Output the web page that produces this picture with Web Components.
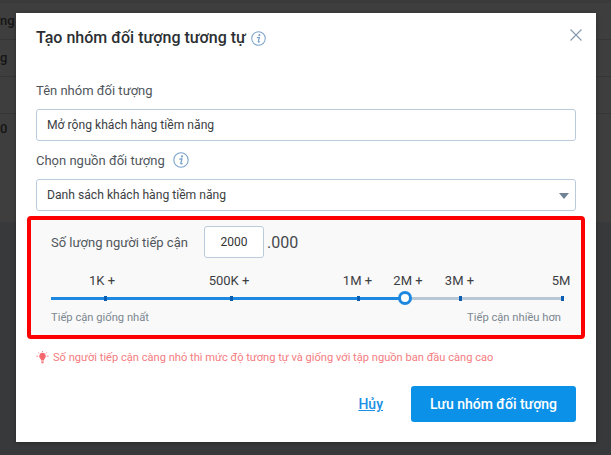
<!DOCTYPE html>
<html lang="vi">
<head>
<meta charset="utf-8">
<title>Tạo nhóm đối tượng tương tự</title>
<style>
  html, body { margin: 0; height: 100%; }
  body { background: #38393b; font-family: Roboto, "Liberation Sans", sans-serif; overflow: hidden; }
</style>
</head>
<body>
<page-behind></page-behind>
<audience-modal heading="Tạo nhóm đối tượng tương tự">
  <form-field label="Tên nhóm đối tượng" value="Mở rộng khách hàng tiềm năng"></form-field>
  <form-field label="Chọn nguồn đối tượng" value="Danh sách khách hàng tiềm năng" hint select></form-field>
  <reach-panel value="2000"></reach-panel>
  <tip-line>Số người tiếp cận càng nhỏ thì mức độ tương tự và giống với tập nguồn ban đầu càng cao</tip-line>
  <modal-actions></modal-actions>
</audience-modal>

<script>
const INFO_ICON = `<svg viewBox="0 0 16 16" fill="none">
  <circle cx="8" cy="8" r="7.2" stroke="#7ba3ca" stroke-width="1.1"/>
  <circle cx="8.9" cy="4.4" r="1.1" fill="#7ba3ca"/>
  <path d="M6.8 7h2.1l-1.1 4.4c-.1.6.4.7 1.3.1" stroke="#7ba3ca" stroke-width="1.3" stroke-linecap="round"/>
</svg>`;

// dimmed table that sits behind the dialog
class PageBehind extends HTMLElement {
  constructor() {
    super();
    this.attachShadow({ mode: 'open' }).innerHTML = `
      <style>
        :host { display: block; position: absolute; left: 0; right: 0; top: 0; height: 222px; background: #3e3e3e; border-top: 3px solid #3a3a3a; box-sizing: border-box; color: #151515; font-size: 13px; font-weight: 500; }
        .row { height: 37px; border-bottom: 1px solid #363636; box-sizing: border-box; display: flex; align-items: center; }
        .row:first-child { height: 36px; }
        .row:last-child { border: 0; height: 31px; }
        span { display: block; margin-top: -2px; }
      </style>
      <div class="row"><span>ng</span></div>
      <div class="row"><span>g</span></div>
      <div class="row"></div>
      <div class="row"><span>0</span></div>`;
  }
}

class AudienceModal extends HTMLElement {
  constructor() {
    super();
    const title = this.getAttribute('heading');
    this.attachShadow({ mode: 'open' }).innerHTML = `
      <style>
        :host { display: block; position: absolute; left: 16px; top: 13px; width: 580px; height: 429px; background: #fff; box-sizing: border-box; padding: 0 20px; box-shadow: 0 1px 4px rgba(0,0,0,.3); }
        header { display: flex; align-items: center; gap: 5px; height: 48px; padding-top: 1px; box-sizing: border-box; font-size: 16px; font-weight: 500; color: #2b2f33; }
        header svg { display: block; width: 15px; height: 15px; margin-top: 1px; }
        .close { position: absolute; right: 14px; top: 16px; width: 12px; height: 12px; }
        .body { padding-top: 20px; display: flex; flex-direction: column; }
      </style>
      <header><span>${title}</span>${INFO_ICON}</header>
      <svg class="close" viewBox="0 0 12 12"><path d="M.5.5l11 11M11.5.5l-11 11" stroke="#8299ad" stroke-width="1.1" fill="none"/></svg>
      <div class="body"><slot></slot></div>`;
  }
}

class FormField extends HTMLElement {
  constructor() {
    super();
    const hint = this.hasAttribute('hint') ? `<span class="hint">${INFO_ICON}</span>` : '';
    const caret = this.hasAttribute('select') ? '<i class="caret"></i>' : '';
    this.attachShadow({ mode: 'open' }).innerHTML = `
      <style>
        :host { display: block; }
        label { display: flex; align-items: center; height: 18px; margin-bottom: 10px; font-size: 13px; color: #50565c; }
        .hint { margin-left: 8px; display: block; width: 16px; height: 16px; }
        .box { position: relative; height: 32px; box-sizing: border-box; border: 1px solid #bccbdc; border-radius: 3px; padding: 0 10px; display: flex; align-items: center; font-size: 12.15px; color: #3c4043; background: #fff; }
        .caret { position: absolute; right: 6px; top: 13px; border: 5px solid transparent; border-top: 6px solid #6f8296; border-bottom: 0; }
      </style>
      <label>${this.getAttribute('label')}${hint}</label>
      <div class="box">${this.getAttribute('value')}${caret}</div>`;
  }
  connectedCallback() {
    this.style.marginBottom = this.hasAttribute('select') ? '5px' : '10px';
  }
}

class ReachPanel extends HTMLElement {
  constructor() {
    super();
    // measured from the window, track starts at 51
    const ticks = [105, 231, 358, 460, 562].map(x => `<i class="tick" style="left:${x - 51}px"></i>`).join('');
    this.attachShadow({ mode: 'open' }).innerHTML = `
      <style>
        :host { display: block; margin: 0 -9px; height: 123px; box-sizing: border-box; border: 4px solid #fe0000; border-radius: 4px; background: #f9f9f9; padding: 0 20px; color: #3c4043; }
        .top { display: flex; align-items: center; height: 32px; margin-top: 6px; font-size: 13px; color: #50565c; }
        .qty { margin-left: 16px; width: 60px; height: 32px; box-sizing: border-box; border: 1px solid #bccbdc; border-radius: 3px; background: #fff; font-size: 12px; color: #333; display: flex; align-items: center; justify-content: center; }
        .zeros { margin-left: 3px; font-size: 16px; color: #45494d; }
        .labels { display: grid; grid-template-columns: 54px 124px 128.5px 50.5px 51.5px 101.5px; height: 20px; margin-top: 13px; font-size: 13px; line-height: 20px; }
        .labels span { justify-self: end; white-space: nowrap; transform: translateX(50%); }
        .labels span:nth-child(1) { justify-self: start; transform: none; margin-left: 38px; }
        .track { position: relative; height: 3px; margin-top: 6px; background: #b8c7d6; width: 512px; border-radius: 2px; }
        .fill { position: absolute; left: 0; top: 0; height: 3px; width: 354px; background: #1e88e0; }
        .tick { position: absolute; top: -1px; width: 3px; height: 5px; background: #0a5db0; margin-left: -1px; }
        .thumb { position: absolute; left: 347px; top: -6px; width: 14px; height: 14px; box-sizing: border-box; border: 3px solid #1e88e0; border-radius: 50%; background: #fff; }
        .ends { display: flex; justify-content: space-between; width: 510px; margin-top: 11px; font-size: 11.2px; color: #7b8790; }
      </style>
      <div class="top"><span>Số lượng người tiếp cận</span><div class="qty">${this.getAttribute('value')}</div><span class="zeros">.000</span></div>
      <div class="labels">
        <span>1K +</span><span>500K +</span><span>1M +</span><span>2M +</span><span>3M +</span><span>5M</span>
      </div>
      <div class="track"><div class="fill"></div>${ticks}<div class="thumb"></div></div>
      <div class="ends"><span>Tiếp cận giống nhất</span><span>Tiếp cận nhiều hơn</span></div>`;
  }
}

class TipLine extends HTMLElement {
  constructor() {
    super();
    this.attachShadow({ mode: 'open' }).innerHTML = `
      <style>
        :host { display: flex; align-items: center; gap: 4px; height: 14px; margin-top: 11px; font-size: 11.12px; color: #f47c80; white-space: nowrap; }
        svg { display: block; flex: none; }
      </style>
      <svg width="13" height="13" viewBox="0 0 13 13" fill="#f4696e">
        <path d="M6.5 1.8a3.4 3.4 0 0 0-2 6.1c.4.3.5.6.5 1h3c0-.4.1-.7.5-1a3.4 3.4 0 0 0-2-6.1zM5 9.4h3v1.1H5zM5.5 11h2v1.2h-2z"/>
        <path d="M6.5 0v1.2M.4 5.2h1.8M10.8 5.2h1.8M2.3 1.4l1 1M10.7 1.4l-1 1" stroke="#f4696e" stroke-width=".8"/>
      </svg>
      <span><slot></slot></span>`;
  }
}

class ModalActions extends HTMLElement {
  constructor() {
    super();
    this.attachShadow({ mode: 'open' }).innerHTML = `
      <style>
        :host { display: flex; align-items: center; justify-content: flex-end; gap: 28px; margin-top: 22px; }
        a { color: #1a8fe3; font-size: 14px; font-weight: 500; text-decoration: underline; }
        button { width: 165px; height: 36px; border: 0; border-radius: 3px; background: #0b92e8; color: #fff; font: 500 14px Roboto, "Liberation Sans", sans-serif; }
      </style>
      <a href="#">Hủy</a><button type="button">Lưu nhóm đối tượng</button>`;
  }
}

customElements.define('page-behind', PageBehind);
customElements.define('audience-modal', AudienceModal);
customElements.define('form-field', FormField);
customElements.define('reach-panel', ReachPanel);
customElements.define('tip-line', TipLine);
customElements.define('modal-actions', ModalActions);
</script>
</body>
</html>
